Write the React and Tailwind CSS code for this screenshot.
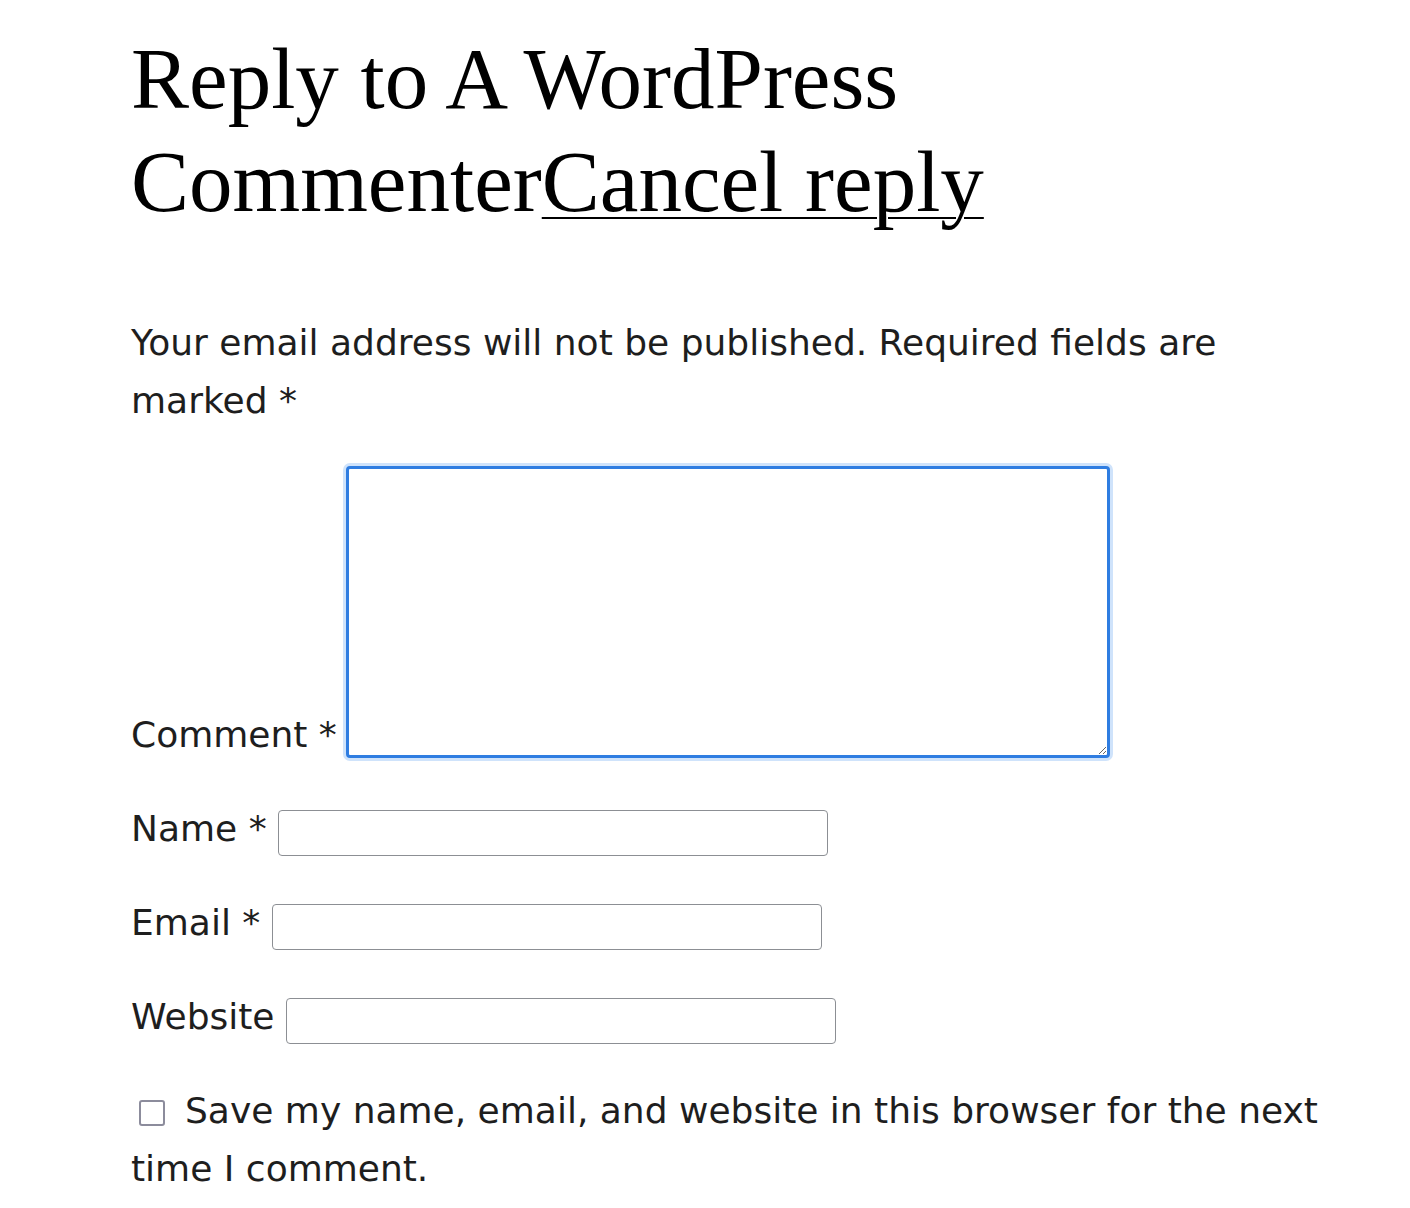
import React from 'react';

const Field = ({ label, required }) => (
  <p className="flex items-start mt-[36px]">
    <label className="whitespace-pre">
      {label}
      {required ? ' *' : ''}{' '}
    </label>
    <input
      type="text"
      className="mt-[10px] h-[46px] w-[550px] rounded-[4px] border border-[#8c8f94] bg-white"
    />
  </p>
);

const App = () => {
  return (
    <div className="min-h-screen bg-white text-[#1e1e1e]">
      <div className="w-[1331px] pl-[131px] font-['DejaVu_Sans',sans-serif] text-[36px] leading-[58px]">
        <h3 className="pt-[27px] font-['Liberation_Serif',serif] text-[87px] leading-[103px] font-normal text-black">
          Reply to A WordPress Commenter
          <a href="#" className="underline decoration-[2px] underline-offset-[6px]">
            Cancel reply
          </a>
        </h3>

        <p className="mt-[81px]">
          Your email address will not be published. Required fields are marked *
        </p>

        <p className="flex items-end mt-[36px]">
          <label className="whitespace-pre">Comment * </label>
          <textarea
            className="-ml-[2px] mb-[6px] h-[292px] w-[764px] rounded-[4px] border-[3px] border-[#2f7de1] bg-white ring-[3px] ring-[#cfe3fb] resize"
          />
        </p>

        <Field label="Name" required />
        <Field label="Email" required />
        <Field label="Website" />

        <p className="mt-[36px]">
          <input
            type="checkbox"
            className="ml-[8px] mr-[20px] inline-block h-[26px] w-[26px] appearance-none rounded-[3px] border-2 border-[#8c8c9c] bg-white align-[-3px]"
          />
          Save my name, email, and website in this browser for the next time I comment.
        </p>
      </div>
    </div>
  );
};

export default App;
